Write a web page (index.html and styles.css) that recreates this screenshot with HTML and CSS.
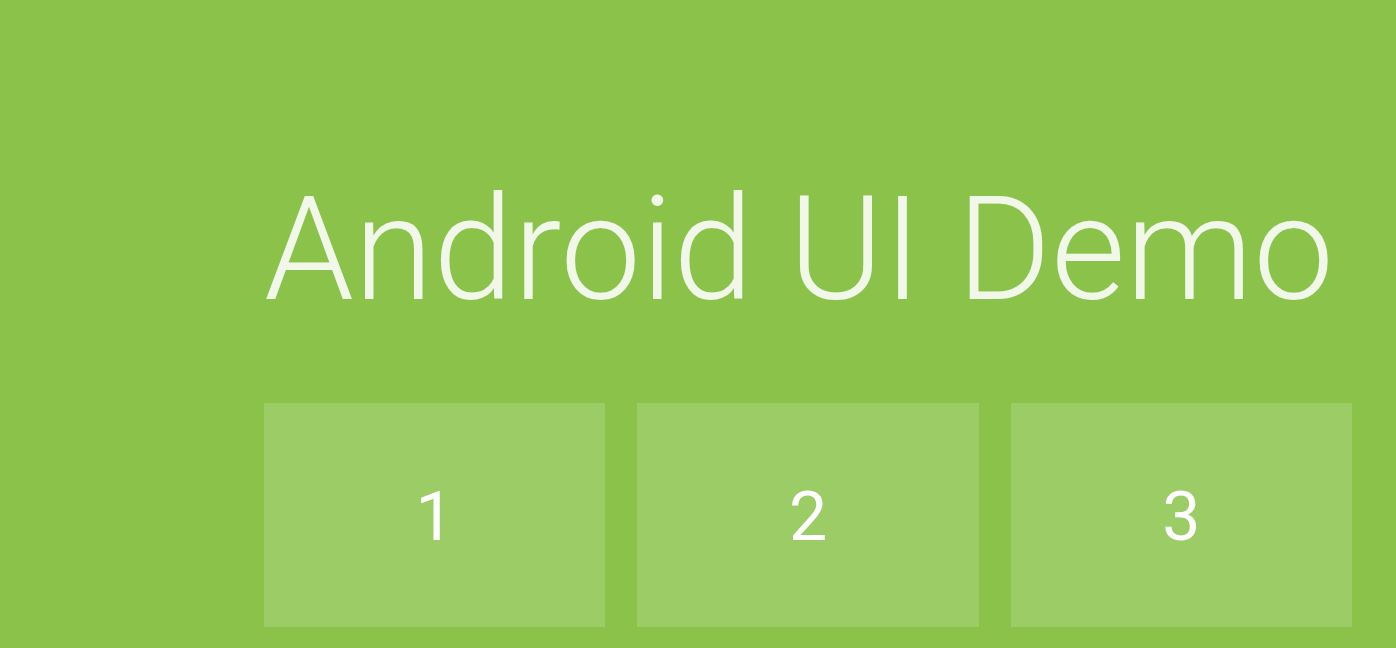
FILE: index.html
```html
<!DOCTYPE html>
<html lang="en">
<head>
<meta charset="utf-8">
<title>Android UI Demo</title>
<link rel="stylesheet" href="styles.css">
</head>
<body>
<main class="page">
  <h1 class="title">Android UI Demo</h1>
  <div class="tiles">
    <div class="tile">1</div>
    <div class="tile">2</div>
    <div class="tile">3</div>
  </div>
</main>
</body>
</html>
```
FILE: styles.css
```css
html, body {
  margin: 0;
  padding: 0;
  height: 100%;
  background: #8bc34a;
}
body {
  font-family: Roboto, "Liberation Sans", sans-serif;
  overflow: hidden;
}
.page {
  padding: 178px 44px 0 264px;
  display: flex;
  flex-direction: column;
}
.title {
  margin: 0;
  font-size: 144px;
  line-height: 144px;
  font-weight: 300;
  color: #f1f8e9;
  white-space: nowrap;
}
.tiles {
  margin-top: 81px;
  display: grid;
  grid-template-columns: repeat(3, 1fr);
  gap: 32px;
}
.tile {
  height: 224px;
  background: #9ccc65;
  color: #ffffff;
  font-size: 68px;
  font-weight: 400;
  display: flex;
  align-items: center;
  justify-content: center;
  padding-top: 4px;
  box-sizing: border-box;
}
```
